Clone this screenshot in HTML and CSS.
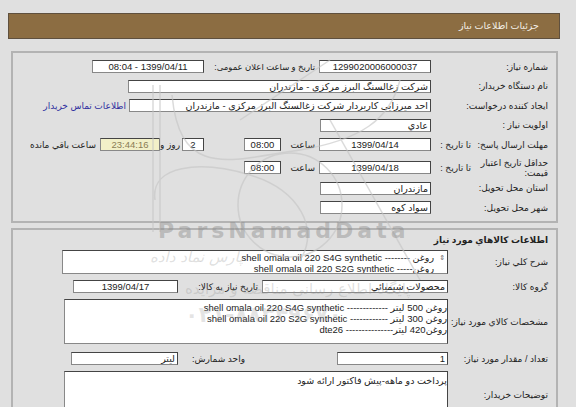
FILE: index.html
```html
<!DOCTYPE html>
<html lang="fa" dir="rtl">
<head>
    <meta charset="UTF-8">
    <meta name="viewport" content="width=device-width, initial-scale=1.0">
    <title>جزئیات اطلاعات نیاز</title>
    <link rel="stylesheet" href="styles.css">
</head>
<body>
    <div class="page">
        <div class="title-bar">جزئیات اطلاعات نیاز</div>

        <!-- مشخصات کلی نیاز -->
        <div class="panel panel-main">
            <div class="row">
                <div class="label">شماره نیاز:</div>
                <div class="box w112 center">1299020006000037</div>
                <div class="label2 w115 tight">تاریخ و ساعت اعلان عمومی:</div>
                <div class="box w112 center">1399/04/11 - 08:04</div>
            </div>
            <div class="row">
                <div class="label">نام دستگاه خریدار:</div>
                <div class="box w303">شرکت زغالسنگ البرز مرکزی - مازندران</div>
            </div>
            <div class="row">
                <div class="label">ایجاد کننده درخواست:</div>
                <div class="box w302">احد میرزایی کاربردار شرکت زغالسنگ البرز مرکزی - مازندران</div>
                <a class="link" href="#">اطلاعات تماس خریدار</a>
            </div>
            <div class="row">
                <div class="label">اولویت نیاز :</div>
                <div class="box w111">عادي</div>
            </div>
            <div class="row">
                <div class="label-main nowrap">مهلت ارسال پاسخ:</div>
                <div class="label-sub">تا تاریخ :</div>
                <div class="box w112 center">1399/04/14</div>
                <div class="label2 w38">ساعت</div>
                <div class="box w37 center">08:00</div>
                <div class="spacer w40"></div>
                <div class="box w22 center">2</div>
                <div class="label2 w22 day">روز و</div>
                <div class="box w60 center remain">23:44:16</div>
                <div class="label2">ساعت باقي مانده</div>
            </div>
            <div class="row row-two">
                <div class="label-main">حداقل تاریخ اعتبار قیمت:</div>
                <div class="label-sub">تا تاریخ :</div>
                <div class="box w112 center">1399/04/18</div>
                <div class="label2 w38">ساعت</div>
                <div class="box w37 center">08:00</div>
            </div>
            <div class="row">
                <div class="label">استان محل تحویل:</div>
                <div class="box w111">مازندران</div>
            </div>
            <div class="row">
                <div class="label">شهر محل تحویل:</div>
                <div class="box w111">سواد کوه</div>
            </div>
        </div>

        <!-- کالاها -->
        <div class="panel panel-items">
            <div class="section-title">اطلاعات کالاهاي مورد نیاز</div>
            <div class="row">
                <div class="label label-wide">شرح کلي نیاز:</div>
                <div class="box w386 multi summary">
                    <span class="scroll">&#8661;</span>
                    <div>روغن -------- shell omala oil 220 S4G synthetic</div>
                    <div>روغن----- shell omala oil 220 S2G synthetic</div>
                </div>
            </div>
            <div class="row">
                <div class="label label-wide">گروه کالا:</div>
                <div class="box w186">محصولات شیمیائي</div>
                <div class="label2 w84">تاریخ نیاز به کالا:</div>
                <div class="box w105 center">1399/04/17</div>
            </div>
            <div class="row row-specs">
                <div class="label label-wide nowrap">مشخصات کالاي مورد نیاز:</div>
                <div class="box w384 multi specs">
                    <div>روغن 500 لیتر ------------- shell omala oil 220 S4G synthetic</div>
                    <div>روغن 300 لیتر ------------ shell omala oil 220 S2G synthetic</div>
                    <div>روغن420 لیتر--------------- dte26</div>
                </div>
            </div>
            <div class="row">
                <div class="label label-wide nowrap">تعداد / مقدار مورد نیاز:</div>
                <div class="box w111">1</div>
                <div class="label2 w159 unit-label">واحد شمارش:</div>
                <div class="box w107">لیتر</div>
            </div>
            <div class="row">
                <div class="label label-wide">توضیحات خریدار:</div>
                <div class="box w384 multi notes">
                    <div>پرداخت دو ماهه-پیش فاکتور ارائه شود</div>
                </div>
            </div>
        </div>
    </div>

    <!-- واترمارک -->
    <div class="watermark">
        <svg class="wm-logo" width="576" height="407" viewBox="0 0 576 407">
            <g fill="none" stroke="#c4c4c4" stroke-width="1.5" opacity="0.6">
                <path d="M153 85 L153 232 M160 85 L160 232"/>
                <path d="M172 95 C180 180 230 160 300 150 C360 140 390 120 400 80"/>
                <path d="M155 200 C150 165 200 160 250 175 C300 190 320 230 300 260"/>
                <circle cx="290" cy="205" r="52"/>
                <path d="M240 120 L330 60"/>
                <path d="M330 120 L420 280"/>
            </g>
        </svg>
        <div class="wm-text">ParsNamadData</div>
        <div class="wm-sign">پارس نماد داده</div>
        <div class="wm-slogan">پایگاه اطلاع رسانی مناقصه و مزایده</div>
        <div class="wm-phone">۰۲۱-۸۸۳۴۹۶۷۰</div>
    </div>
</body>
</html>
```

FILE: styles.css
```css
html {
    overflow: hidden;
}

body {
    margin: 0;
    padding: 0;
    background-color: #e0e0e0;
    font-family: "Liberation Sans", "DejaVu Sans", sans-serif;
    font-size: 9px;
    color: #222;
}

.page {
    padding: 13px 16px 0 8px;
}

.title-bar {
    background-color: #8c6d42;
    border: 1px solid #5f503e;
    color: #f3efe6;
    height: 24px;
    line-height: 24px;
    padding-right: 20px;
    font-size: 9.5px;
}

.panel {
    border: 2px solid #b3b3b3;
    margin: 12px 2px 0 3px;
    padding: 7px 8px 0 0;
    box-sizing: border-box;
}

.panel-main {
    height: 172px;
}

.panel-main .row {
    margin-bottom: 6.5px;
}

.panel-items {
    margin-top: 5px;
    height: 200px;
    padding-top: 5px;
}

.row {
    display: flex;
    align-items: center;
    min-height: 13px;
    margin-bottom: 6px;
}

.panel-main .row-two {
    margin-bottom: 4px;
}

.row-specs {
    margin-bottom: 8px;
}

.label {
    width: 117px;
    flex-shrink: 0;
    font-size: 9px;
}

.label-wide {
    width: 100px;
}

.nowrap {
    white-space: nowrap;
}

.label-main {
    width: 70px;
    flex-shrink: 0;
    font-size: 9px;
    line-height: 10px;
}

.label-sub {
    width: 40px;
    padding-right: 7px;
    flex-shrink: 0;
    font-size: 9px;
}

.label2 {
    flex-shrink: 0;
    padding-right: 4px;
    box-sizing: border-box;
    font-size: 9px;
    white-space: nowrap;
}

.tight {
    font-size: 8.5px;
}

.day {
    padding-right: 2px;
}

.unit-label {
    padding-right: 92px;
}

.box {
    background: #fff;
    border: 1px solid #444;
    border-left-color: #888;
    border-bottom-color: #888;
    height: 13px;
    line-height: 12px;
    padding: 0 2px;
    box-sizing: border-box;
    flex-shrink: 0;
    white-space: nowrap;
    overflow: hidden;
    font-size: 9.5px;
}

.center {
    text-align: center;
}

.remain {
    background: #f2f0c8;
    color: #8a7d55;
}

.multi {
    height: auto;
    line-height: 11px;
    padding: 1px 0 0 0;
}

.summary {
    height: 24px;
    padding-right: 13px;
    position: relative;
}

.scroll {
    position: absolute;
    right: 2px;
    top: 1px;
    font-size: 7px;
    color: #666;
}

.specs {
    height: 45px;
    padding-top: 2px;
}

.notes {
    height: 48px;
    padding-top: 3px;
}

.link {
    color: #2f2f9f;
    text-decoration: none;
    padding-right: 3px;
    font-size: 9px;
}

.section-title {
    font-weight: bold;
    font-size: 9px;
    margin-bottom: 5px;
}

.spacer { flex-shrink: 0; }

.w22 { width: 22px; }
.w37 { width: 37px; }
.w38 { width: 38px; }
.w40 { width: 40px; }
.w60 { width: 60px; }
.w84 { width: 84px; }
.w105 { width: 105px; }
.w107 { width: 107px; }
.w111 { width: 111px; }
.w112 { width: 112px; }
.w115 { width: 115px; }
.w159 { width: 159px; }
.w186 { width: 186px; }
.w302 { width: 302px; }
.w303 { width: 303px; }
.w384 { width: 384px; }
.w386 { width: 386px; }

/* واترمارک روی صفحه */
.watermark {
    position: absolute;
    left: 0;
    top: 0;
    width: 576px;
    height: 407px;
    pointer-events: none;
    color: rgba(150, 150, 150, 0.3);
}

.wm-logo {
    position: absolute;
    left: 0;
    top: 0;
}

.wm-text {
    position: absolute;
    left: 158px;
    top: 218px;
    direction: ltr;
    font-family: "DejaVu Sans", sans-serif;
    font-weight: bold;
    font-size: 22px;
    letter-spacing: 4px;
    color: rgba(140, 140, 140, 0.45);
}

.wm-sign {
    position: absolute;
    left: 150px;
    top: 248px;
    font-family: "DejaVu Sans", sans-serif;
    font-size: 15px;
    font-style: italic;
}

.wm-slogan {
    position: absolute;
    left: 185px;
    top: 280px;
    font-family: "DejaVu Sans", sans-serif;
    font-size: 15px;
}

.wm-phone {
    position: absolute;
    left: 185px;
    top: 302px;
    direction: ltr;
    font-family: "DejaVu Sans", sans-serif;
    font-size: 22px;
    font-weight: bold;
    color: rgba(150, 150, 150, 0.25);
}
```
